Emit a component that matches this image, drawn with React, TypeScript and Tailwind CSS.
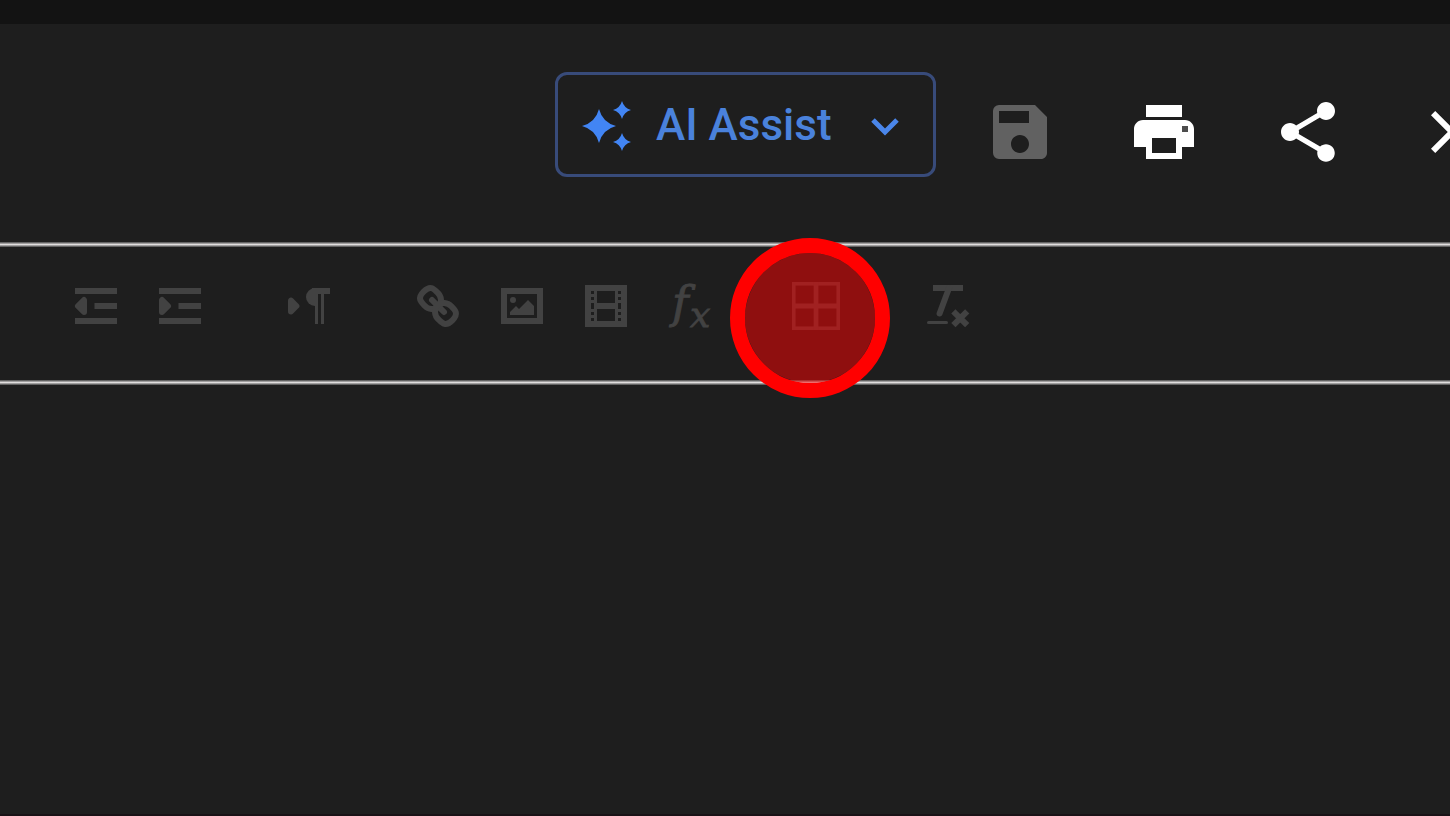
import React, { ReactNode } from "react";

export default function App() {
  return (
    <div className="flex min-h-screen flex-col overflow-hidden border-b-2 border-[#191216] bg-[#1e1e1e]">
      <div className="h-6 bg-[#131313]" />
      <Header />
      <Divider />
      <Toolbar />
      <Divider />
      <main className="flex-1" />
    </div>
  );
}

function Header() {
  return (
    <header className="-mr-[38px] flex items-start justify-end gap-12 pt-12 pb-[65px]">
      <button
        type="button"
        className="flex h-[105px] w-[381px] items-center rounded-xl border-[3px] border-[#384b7a] pr-[30px] pl-6 text-[#4a82dc]"
      >
        <svg
          className="h-12 w-12 overflow-visible"
          viewBox="0 0 48 48"
          fill="#4285f4"
        >
          <path d="M17 8 Q20.500 21.500 34 25 Q20.500 28.500 17 42 Q13.500 28.500 0 25 Q13.500 21.500 17 8Z" />
          <path d="M40 0 Q42 7 49 9 Q42 11 40 18 Q38 11 31 9 Q38 7 40 0Z" />
          <path d="M40 32 Q42 39 49 41 Q42 43 40 50 Q38 43 31 41 Q38 39 40 32Z" />
        </svg>
        <span className="ml-[26px] font-['Roboto',sans-serif] text-[44px] leading-[48px] font-medium whitespace-nowrap">
          AI Assist
        </span>
        <svg className="ml-auto h-9 w-9" viewBox="0 0 36 36" fill="none">
          <path d="M6 13l12 12 12-12" stroke="#4a86ea" strokeWidth="5" />
        </svg>
      </button>
      <div className="flex gap-18 pt-6 text-white">
        <HeaderButton label="Save" color="text-[#616161]">
          <path d="M17 3H5a2 2 0 0 0-2 2v14a2 2 0 0 0 2 2h14c1.100 0 2-.9 2-2V7l-4-4zm-5 16c-1.660 0-3-1.340-3-3s1.340-3 3-3 3 1.340 3 3-1.340 3-3 3zm3-10H5V5h10v4z" />
        </HeaderButton>
        <HeaderButton label="Print" color="text-white">
          <path d="M19 8H5c-1.660 0-3 1.340-3 3v6h4v4h12v-4h4v-6c0-1.660-1.340-3-3-3zm-3 11H8v-5h8v5zm3-7c-.55 0-1-.45-1-1s.45-1 1-1 1 .45 1 1-.45 1-1 1zm-1-9H6v4h12V3z" />
          <path d="M18 10h2v2h-2z" fill="#4d4d4d" />
        </HeaderButton>
        <HeaderButton label="Share" color="text-white">
          <path d="M18 16.080c-.76 0-1.440.3-1.960.77L8.910 12.700c.05-.23.09-.46.09-.7s-.04-.47-.09-.7l7.050-4.110c.54.5 1.250.81 2.040.81 1.660 0 3-1.340 3-3s-1.340-3-3-3-3 1.340-3 3c0 .24.04.47.09.7L8.040 9.810C7.500 9.310 6.790 9 6 9c-1.660 0-3 1.340-3 3s1.340 3 3 3c.79 0 1.500-.31 2.040-.81l7.120 4.160c-.05.21-.08.43-.08.65 0 1.610 1.310 2.920 2.920 2.920s2.920-1.310 2.920-2.920-1.310-2.920-2.920-2.920z" />
        </HeaderButton>
        <HeaderButton label="Close" color="text-white">
          <path d="M19 6.410L17.590 5 12 10.590 6.410 5 5 6.410 10.590 12 5 17.590 6.410 19 12 13.410 17.590 19 19 17.590 13.410 12z" />
        </HeaderButton>
      </div>
    </header>
  );
}

function Toolbar() {
  return (
    <div
      role="toolbar"
      className="flex gap-[75px] pt-8 pb-[47px] pl-[69px] text-[#424242]"
    >
      <div className="flex gap-[30px]">
        <Tool label="Decrease indent">
          <Stroke>
            <path d="M3 4h12M3 14h12M9.500 9h5.500" />
            <path d="M5 7v4L3 9z" fill="currentColor" strokeLinejoin="round" />
          </Stroke>
        </Tool>
        <Tool label="Increase indent">
          <Stroke>
            <path d="M3 4h12M3 14h12M9.500 9h5.500" />
            <path d="M3 7v4l2-2z" fill="currentColor" strokeLinejoin="round" />
          </Stroke>
        </Tool>
      </div>
      <Tool label="Text direction">
        <Stroke>
          <path
            d="M3 7.200v3.600l1.800-1.800z"
            fill="currentColor"
            strokeLinejoin="round"
          />
          <path d="M11 4h4" />
        </Stroke>
        <path d="M11 3a3 3 0 0 0 0 6h1V3z" />
        <rect x="11" y="4" width="1" height="11" />
        <rect x="13" y="4" width="1" height="11" />
      </Tool>
      <div className="flex gap-[30px]">
        <Tool label="Link">
          <Stroke>
            <path d="M7 7l4 4" strokeLinecap="round" />
            <path d="M8.900 4.577a3.476 3.476 0 0 1 .36 4.679A3.476 3.476 0 0 1 4.577 8.900C3.185 7.500 2.035 6.400 4.217 4.217S7.500 3.185 8.900 4.577Z" />
            <path d="M13.423 9.100a3.476 3.476 0 0 0-4.679-.36 3.476 3.476 0 0 0 .36 4.679c1.392 1.392 2.500 2.542 4.679.36S14.815 10.500 13.423 9.100Z" />
          </Stroke>
        </Tool>
        <Tool label="Image">
          <Stroke>
            <rect x="3" y="4" width="12" height="10" />
          </Stroke>
          <circle cx="6" cy="7" r="1" />
          <path d="M5 12v-1l2-2 1 1 3-3 2 2v3z" />
        </Tool>
        <Tool label="Video">
          <Stroke>
            <rect x="3" y="3" width="12" height="12" />
          </Stroke>
          <path d="M5 3h1v12H5zM12 3h1v12h-1zM5 8h8v2H5z" />
          <path d="M3 5h3v1H3zM3 7h3v1H3zM3 10h3v1H3zM3 12h3v1H3z" />
          <path d="M12 5h3v1h-3zM12 7h3v1h-3zM12 10h3v1h-3zM12 12h3v1h-3z" />
        </Tool>
        <Tool label="Formula">
          <g
            className="font-['DejaVu_Serif','Liberation_Serif',serif] italic"
            stroke="currentColor"
            strokeWidth="0.300"
          >
            <text x="3" y="13" fontSize="15">
              f
            </text>
            <text x="9" y="16" fontSize="12">
              x
            </text>
          </g>
        </Tool>
      </div>
      <div className="relative">
        <Tool label="Table">
          <g fill="none" stroke="currentColor">
            <rect x="0.600" y="1.600" width="14.800" height="14.800" strokeWidth="1.200" />
            <path d="M8 1v16M0 9h16" strokeWidth="1.600" />
          </g>
        </Tool>
        {/* click marker */}
        <div className="pointer-events-none absolute -top-[41px] -left-[62px] h-40 w-40 rounded-full border-[15px] border-[#ff0000] bg-[#ff0000]/50 bg-clip-padding" />
      </div>
      <Tool label="Clear formatting">
        <Stroke>
          <path d="M5 3h8" />
          <path d="M6.200 11.500l3.150-8.500" strokeLinecap="round" />
          <path d="M11.500 11.500l3.200 3.200M14.700 11.500l-3.200 3.200" />
        </Stroke>
        <rect x="2" y="14" width="7" height="1" rx="0.500" />
      </Tool>
    </div>
  );
}

function Divider() {
  return (
    <div className="h-[5px] bg-linear-to-b from-[#484848] via-[#e0dede] to-[#484848]" />
  );
}

interface IconButtonProps {
  label: string;
  children: ReactNode;
}

function HeaderButton({
  label,
  color,
  children,
}: IconButtonProps & { color: string }) {
  return (
    <button type="button" aria-label={label} className={color}>
      <svg className="h-18 w-18" viewBox="0 0 24 24" fill="currentColor">
        {children}
      </svg>
    </button>
  );
}

function Tool({ label, children }: IconButtonProps) {
  return (
    <button type="button" aria-label={label} className="block">
      <svg
        className="h-[54px] w-[54px] overflow-visible"
        viewBox="0 0 18 18"
        fill="currentColor"
      >
        {children}
      </svg>
    </button>
  );
}

function Stroke({ children }: { children: ReactNode }) {
  return (
    <g
      fill="none"
      stroke="currentColor"
      strokeWidth="2"
      strokeLinecap="square"
    >
      {children}
    </g>
  );
}
